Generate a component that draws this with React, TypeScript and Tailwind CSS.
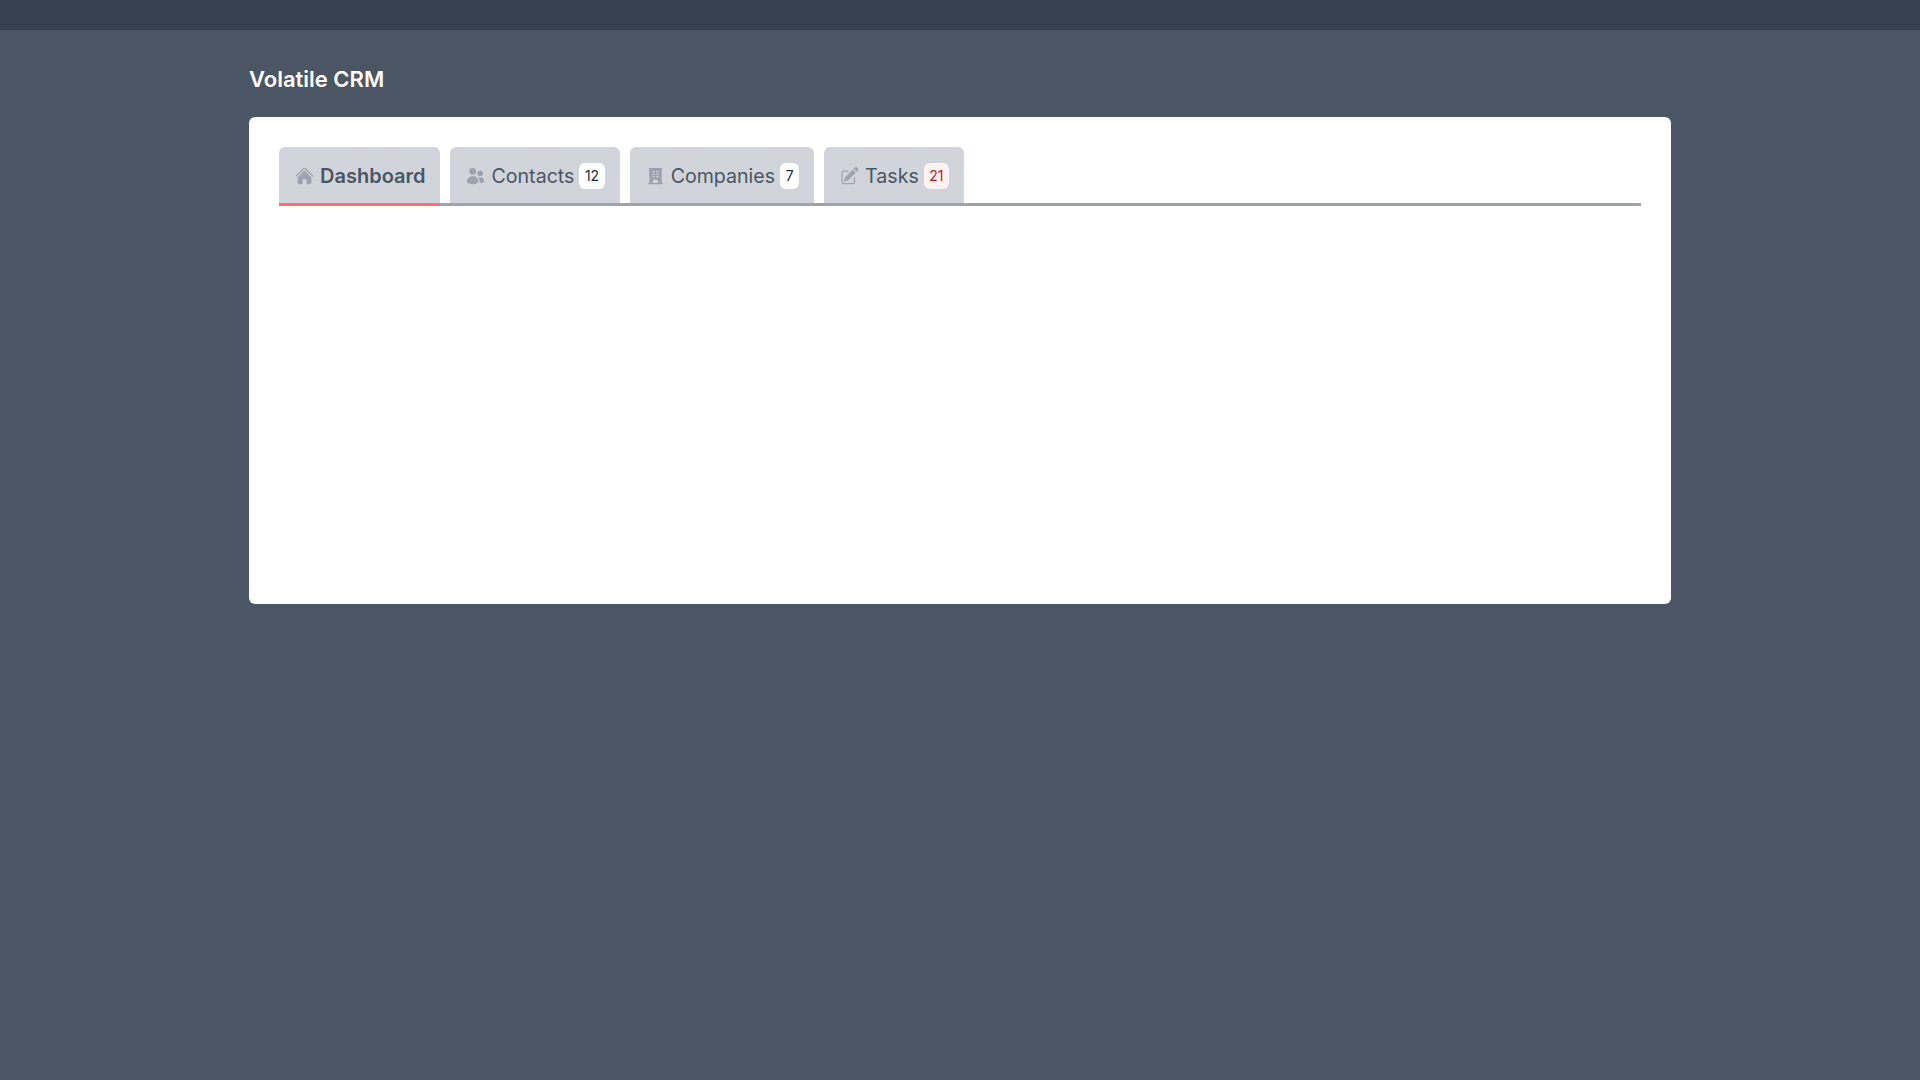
import React from "react";
import { HiHome, HiUsers, HiBuildingOffice, HiPencilSquare } from "react-icons/hi2";

type Tab = { label: string; icon: React.ElementType; count?: string; active?: boolean; red?: boolean };

const tabs: Tab[] = [
  { label: "Dashboard", icon: HiHome, active: true },
  { label: "Contacts", icon: HiUsers, count: "12" },
  { label: "Companies", icon: HiBuildingOffice, count: "7" },
  { label: "Tasks", icon: HiPencilSquare, count: "21", red: true },
];

export default function App() {
  return (
    <div className="min-h-[1080px] bg-[#4b5563] font-['Inter',sans-serif]">
      <div className="h-[30px] bg-[#374151]" />
      <div className="mx-[249px] pt-[34px]">
        <h1 className="h-[53px] text-[22px] leading-[30px] font-semibold text-white">Volatile CRM</h1>
        <div className="h-[487px] rounded-md bg-white p-[30px]">
          <div className="flex h-[59px] gap-[10px] border-b-[3px] border-[#9ca3af]">
            {tabs.map((t) => {
              const Icon = t.icon;
              return (
                <div
                  key={t.label}
                  className={
                    t.active
                      ? "mb-[-3px] flex h-[59px] items-center rounded-t-md border-b-[3px] border-[#f87171] bg-[#d1d5db] px-[15px] pt-[1px]"
                      : "flex h-[56px] items-center rounded-t-md bg-[#d1d5db] px-[15px] pt-[1px]"
                  }
                >
                  <Icon className="mr-[5px] h-5 w-[21px] shrink-0 text-[#9ca3af]" />
                  <span className={t.active ? "text-[20px] leading-7 font-semibold text-[#4b5563]" : "text-[19.6px] leading-7 text-[#4b5563]"}>
                    {t.label}
                  </span>
                  {t.count && (
                    <span
                      className={
                        t.red
                          ? "ml-[5px] rounded-md bg-[#fef2f2] px-[5.5px] text-[14px] leading-[26px] text-[#b91c1c]"
                          : "ml-[5px] rounded-md bg-white px-[5.5px] text-[14px] leading-[26px] text-[#1f2937]"
                      }
                    >
                      {t.count}
                    </span>
                  )}
                </div>
              );
            })}
          </div>
        </div>
      </div>
    </div>
  );
}
